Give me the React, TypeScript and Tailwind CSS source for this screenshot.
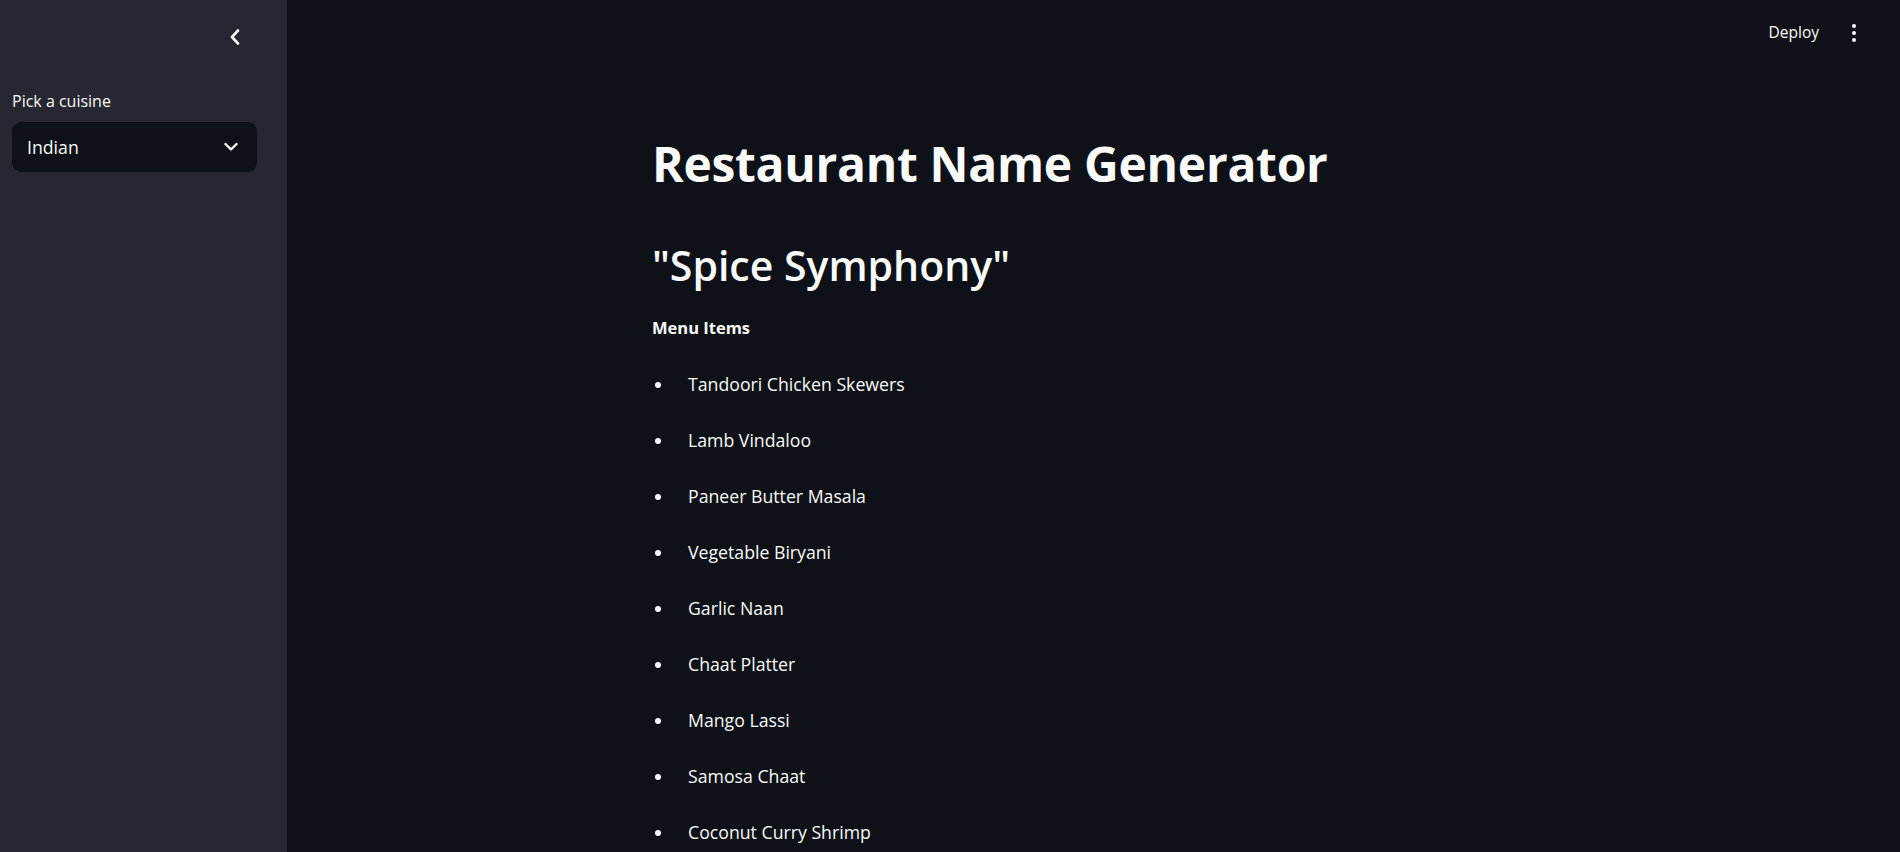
const items = [
  "Tandoori Chicken Skewers",
  "Lamb Vindaloo",
  "Paneer Butter Masala",
  "Vegetable Biryani",
  "Garlic Naan",
  "Chaat Platter",
  "Mango Lassi",
  "Samosa Chaat",
  "Coconut Curry Shrimp",
];

function ChevronLeft() {
  return (
    <svg width="12" height="16" viewBox="0 0 12 16" fill="none">
      <path d="M9 1.5 L3 8 L9 14.5" stroke="#fafafa" strokeWidth="2.6" strokeLinecap="round" strokeLinejoin="round" />
    </svg>
  );
}

function ChevronDown() {
  return (
    <svg width="14" height="10" viewBox="0 0 14 10" fill="none">
      <path d="M1.5 2 L7 7.5 L12.5 2" stroke="#fafafa" strokeWidth="2.4" strokeLinecap="round" strokeLinejoin="round" />
    </svg>
  );
}

export default function App() {
  return (
    <div className="flex h-[852px] w-full overflow-hidden font-['Open_Sans',sans-serif] text-[#fafafa]">
      <aside className="w-[287px] shrink-0 bg-[#262730] px-3">
        <div className="flex h-[74px] items-center justify-end pr-[34px]">
          <ChevronLeft />
        </div>
        <label className="mt-[13px] block text-[16px] leading-[28px]">Pick a cuisine</label>
        <div className="mt-[7px] flex h-[50px] w-[245px] items-center justify-between rounded-[9px] bg-[#0e1117] pl-[15px] pr-[19px]">
          <span className="text-[17.7px]">Indian</span>
          <ChevronDown />
        </div>
      </aside>

      <main className="flex-1 bg-[#0e1117]">
        <div className="flex h-[66px] items-center justify-end gap-[33px] pr-[44px]">
          <span className="text-[15.5px]">Deploy</span>
          <div className="flex flex-col gap-[3px]">
            <span className="h-[4px] w-[4px] rounded-full bg-[#fafafa]" />
            <span className="h-[4px] w-[4px] rounded-full bg-[#fafafa]" />
            <span className="h-[4px] w-[4px] rounded-full bg-[#fafafa]" />
          </div>
        </div>

        <div className="mx-auto w-[883px]">
          <h1 className="mt-[67px] text-[48px] font-bold leading-[62px] tracking-[-0.3px]">Restaurant Name Generator</h1>
          <h2 className="mt-[45px] text-[41px] font-semibold leading-[50px]">"Spice Symphony"</h2>
          <p className="mt-[26px] text-[16.5px] font-bold leading-[24px]">Menu Items</p>
          <ul className="mt-[16px]">
            {items.map((item) => (
              <li key={item} className="flex h-[56px] items-center">
                <span className="ml-[3px] mt-[2px] h-[6px] w-[6px] rounded-full bg-[#fafafa]" />
                <span className="ml-[27px] text-[17.7px]">{item}</span>
              </li>
            ))}
          </ul>
        </div>
      </main>
    </div>
  );
}
